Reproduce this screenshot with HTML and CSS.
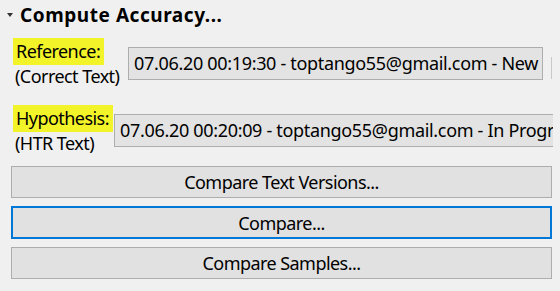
FILE: index.html
```html
<!DOCTYPE html>
<html>
<head>
<meta charset="utf-8">
<link rel="stylesheet" href="styles.css">
</head>
<body>
<div class="panel">
  <div class="header">
    <svg class="twisty" width="6" height="4" viewBox="0 0 6 4"><path d="M0 0H6L3 4Z" fill="#333"/></svg>
    <span class="title">Compute Accuracy...</span>
  </div>
  <div class="row row-ref">
    <div class="labels labels-ref">
      <span class="mark">Reference:</span>
      <span class="sub">(Correct Text)</span>
    </div>
    <div class="field field-ref">07.06.20 00:19:30 - toptango55@gmail.com - New</div>
    <div class="extra"></div>
  </div>
  <div class="row row-hyp">
    <div class="labels labels-hyp">
      <span class="mark">Hypothesis:</span>
      <span class="sub">(HTR Text)</span>
    </div>
    <div class="field field-hyp">07.06.20 00:20:09 - toptango55@gmail.com - In Progress</div>
  </div>
  <div class="buttons">
    <button class="btn">Compare Text Versions...</button>
    <button class="btn btn-focus">Compare...</button>
    <button class="btn">Compare Samples...</button>
  </div>
</div>
</body>
</html>
```
FILE: styles.css
```css
html, body {
  margin: 0;
  padding: 0;
  background: #f0f0f0;
}
body {
  font-family: "Noto Sans", "Open Sans", sans-serif;
  font-size: 18px;
  letter-spacing: -0.55px;
  color: #000;
  width: 560px;
  height: 291px;
  overflow: hidden;
}
.panel {
  width: 553px;
  overflow: hidden;
}
.header {
  display: flex;
  align-items: center;
  height: 30px;
  padding-left: 7px;
}
.twisty {
  margin-right: 7px;
  margin-top: -1px;
}
.title {
  font-weight: bold;
  font-size: 19px;
  letter-spacing: 0.55px;
  line-height: 30px;
}
.row {
  display: flex;
  align-items: center;
  white-space: nowrap;
}
.row-ref {
  margin-top: 8px;
  height: 50px;
}
.row-hyp {
  margin-top: 17px;
  height: 50px;
}
.labels {
  display: flex;
  flex-direction: column;
  align-items: flex-start;
  padding-left: 13px;
  flex: none;
  box-sizing: border-box;
}
.labels-ref { width: 128px; }
.labels-hyp { width: 114px; }
.mark {
  background: #f3f32a;
  line-height: 27px;
  padding: 0 4px 0 3px;
}
.sub {
  line-height: 23px;
  padding-left: 2px;
}
.field {
  flex: none;
  height: 33px;
  box-sizing: border-box;
  border: 1px solid #adadad;
  background: #e3e3e3;
  line-height: 31px;
  padding-left: 5px;
  letter-spacing: -0.32px;
  overflow: hidden;
}
.field-ref { width: 415px; }
.field-hyp { width: 460px; }
.extra {
  flex: none;
  margin-left: 8px;
  width: 20px;
  height: 22px;
  margin-top: 10px;
  border-left: 1px solid #c9c9c9;
}
.buttons {
  display: flex;
  flex-direction: column;
  gap: 8px;
  margin-top: 11px;
  padding-left: 11px;
}
.btn {
  width: 541px;
  height: 32px;
  box-sizing: border-box;
  border: 1px solid #adadad;
  background: #e1e1e1;
  font-family: inherit;
  font-size: 18px;
  letter-spacing: -0.55px;
  color: #000;
  padding: 0;
  margin: 0;
  line-height: 30px;
}
.btn-focus {
  border: 2px solid #0078d7;
  height: 33px;
}
```
